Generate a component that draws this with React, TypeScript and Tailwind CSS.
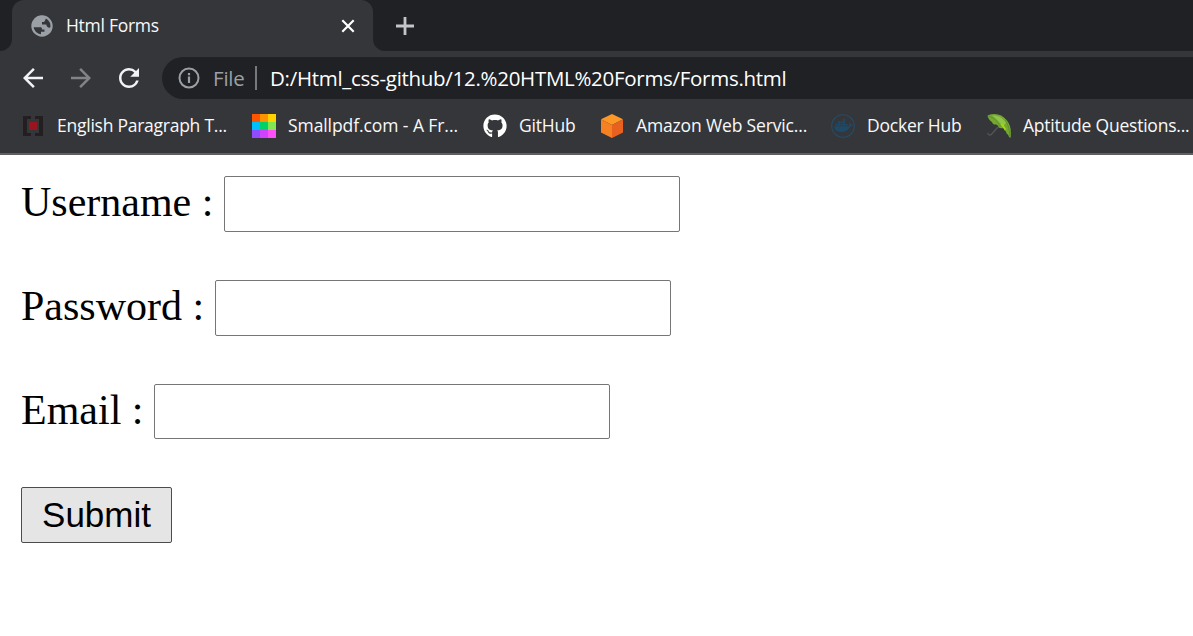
import type { ReactNode } from "react";
import { MdArrowBack, MdArrowForward, MdRefresh } from "react-icons/md";
import { FaGithub } from "react-icons/fa";

function Globe() {
  return (
    <svg viewBox="0 0 22 22" className="h-[22px] w-[22px]">
      <circle cx="11" cy="11" r="9.6" fill="none" stroke="#9aa0a6" strokeWidth="2.2" />
      <path d="M12 1C6 0 1 5 1 11v1c3 .3 6 .2 8 .2 1.600 0 2 .6 2 2.200h2.500v2.400h-3.500V20c6 1 11-3 11-8.500-1.500 1.600-3.500 1.600-4.700.3-.7-.8-1-1.600-1-2.400h-4.300V7h1.600c1.500 0 1.300-2.400 2.500-3.500z" fill="#9aa0a6" />
    </svg>
  );
}

function Info() {
  return (
    <svg viewBox="0 0 22 22" className="h-[22px] w-[22px]">
      <circle cx="11" cy="11" r="9.500" fill="none" stroke="#9aa0a6" strokeWidth="2" />
      <path d="M9.900 9.500h2.200v6.500H9.900zM9.900 6h2.200v2.200H9.900z" fill="#9aa0a6" />
    </svg>
  );
}

function Brackets() {
  return (
    <svg viewBox="0 0 20 20" className="h-5 w-5">
      <path d="M0 0h8v3H4v14h4v3H0zM12 0h8v20h-8v-3h4V3h-4z" fill="#231f20" />
      <path d="M6 6h8v8H6z" fill="#981520" />
    </svg>
  );
}

function ColorGrid() {
  return (
    <span className="grid h-6 w-6 grid-cols-3 grid-rows-3">
      <i className="bg-[#ff5400]" />
      <i className="bg-[#ff9200]" />
      <i className="bg-[#ffd200]" />
      <i className="bg-[#00bfff]" />
      <i className="bg-[#00d267]" />
      <i className="bg-[#81e650]" />
      <i className="bg-[#8f4cff]" />
      <i className="bg-[#cf42ff]" />
      <i className="bg-[#ff4ff8]" />
    </span>
  );
}

function Cube() {
  return (
    <svg viewBox="0 0 24 24" className="h-6 w-6">
      <path d="M12 0l11 5.200-11 5.800L1 5.200z" fill="#fd9827" />
      <path d="M1 5.200L12 11v13L1 18.500z" fill="#f58122" />
      <path d="M23 5.200L12 11v13l11-5.500z" fill="#e9611f" />
    </svg>
  );
}

function Docker() {
  return (
    <svg viewBox="0 0 24 24" className="h-6 w-6">
      <circle cx="12" cy="12" r="11.300" fill="none" stroke="#244c66" strokeWidth="1.100" />
      <path d="M3.300 12.300h13.400c.7 0 1.300-.2 1.700-.6-.6-1-.5-2.300.2-3.200.9.500 1.300 1.200 1.400 2 .8-.2 1.500 0 2 .4-.5 1.100-1.500 1.500-2.700 1.400-1.700 4-4.900 5.700-9.100 5.700-4.200 0-6.700-1.700-6.900-5.700z" fill="#1f4a67" />
      <path d="M4.500 9.700h2.100v2H4.500zM7 9.700h2.100v2H7zM9.500 9.700h2.100v2H9.500zM12 9.700h2.100v2H12zM14.500 9.700h2.100v2h-2.100zM7 7.300h2.100v2H7zM9.500 7.300h2.100v2H9.500zM12 7.300h2.100v2H12zM12 5h2.100v1.900H12z" fill="#1f4a67" />
    </svg>
  );
}

function Umbrella() {
  return (
    <svg viewBox="0 0 24 24" className="h-6 w-6">
      <path d="M11 13L4.700 20c-1.500 1.800-4 1.200-3.800-1.200" fill="none" stroke="#54565a" strokeWidth="1.200" />
      <path d="M.5 1.500C8-1.500 15 .3 20 6.500c3.500 4.500 4.500 10 3.500 17.500-1.200-.6-2-1.700-2.400-3.300-1.300-.7-2-1.700-2.100-3.200-1.700-.9-2.300-2-2.500-3.500-2 .5-3.800.2-5-.8-.2-1.500-.9-2.200-2.300-2.800-2.200.2-3.600-.5-4.200-2.500C3 7 1.200 4.500.5 1.500z" fill="#74a832" />
      <path d="M5 1.500c6-.4 10 1.800 14 7l-3 4.500C13 8.500 9.500 4.500 5 1.500z" fill="#91c448" />
      <path d="M1.500 2c5 1.500 9 5 12 11M18 6c3 4 4.500 9 4.800 16" fill="none" stroke="#5b8b28" strokeWidth=".8" />
      <path d="M14.500 10l4 5.500" stroke="#add80c" strokeWidth="1.800" />
    </svg>
  );
}

function Bookmark({ icon, label, className }: { icon: ReactNode; label: string; className: string }) {
  return (
    <div className="flex shrink-0 items-center">
      <span className="flex w-6 justify-center">{icon}</span>
      <span className={`mb-[2px] ml-3 whitespace-nowrap text-[17.5px] leading-6 text-[#f8f9fa] ${className}`}>{label}</span>
    </div>
  );
}

function Field({ label, type, className, inputClass }: { label: string; type: string; className: string; inputClass: string }) {
  return (
    <div className="flex h-[104px] items-start">
      <label className={`shrink-0 pt-[2px] text-[42px] leading-[48px] text-black ${className}`}>{label}</label>
      <input type={type} aria-label={label} className={`w-[456px] rounded-[2px] border border-[#767676] bg-white px-2 text-[35px] outline-none ${inputClass}`} />
    </div>
  );
}

export default function App() {
  return (
    <div className="flex h-[636px] w-[1193px] flex-col overflow-hidden bg-white">
      <header className="h-[155px] shrink-0 border-b-2 border-[#5f5f63] bg-[#35363a] font-['Open_Sans',sans-serif]">
        <div className="flex h-[51px] bg-[#35363a]">
          <div className="w-3 rounded-br-[12px] bg-[#202124]" />
          <div className="flex w-[361px] bg-[#202124]">
            <div className="flex w-full items-center rounded-t-[12px] bg-[#35363a] pl-[19px] pr-[18px]">
              <Globe />
              <span className="ml-[13px] text-[17.5px] tracking-[-0.28px] text-[#f8f9fa]">Html Forms</span>
              <svg viewBox="0 0 14 14" className="ml-auto h-[14px] w-[14px]">
                <path d="M1.300 1.300l11.400 11.400M12.700 1.300L1.300 12.700" stroke="#fff" strokeWidth="2.200" />
              </svg>
            </div>
          </div>
          <div className="flex flex-1 items-center rounded-bl-[12px] bg-[#202124] pl-[23px]">
            <svg viewBox="0 0 18 18" className="h-[18px] w-[18px]">
              <path d="M9 0v18M0 9h18" stroke="#c4c5c7" strokeWidth="2.800" />
            </svg>
          </div>
        </div>
        <div className="mt-[6px] flex h-[42px] items-center pl-[18px]">
          <MdArrowBack size={30} className="text-[#f1f3f4]" />
          <MdArrowForward size={30} className="ml-[18px] text-[#828386]" />
          <MdRefresh size={30} className="ml-[18px] text-[#f1f3f4]" />
          <div className="ml-[18px] flex h-[42px] flex-1 items-center rounded-l-full bg-[#202124] pl-[16px] text-[20.5px] leading-[30px]">
            <Info />
            <span className="ml-[13px] w-[42px] tracking-[-0.2px] text-[#9aa0a6]">File</span>
            <span className="h-6 w-[2px] bg-[#77787b]" />
            <span className="ml-[13px] tracking-[-0.29px] text-white">D:/Html_css-github/12.%20HTML%20Forms/Forms.html</span>
          </div>
        </div>
        <div className="flex h-[54px] items-center pl-[21px]">
          <Bookmark icon={<Brackets />} label="English Paragraph T..." className="w-[195px] tracking-[-0.25px]" />
          <Bookmark icon={<ColorGrid />} label="Smallpdf.com - A Fr..." className="w-[195px] tracking-[-0.08px]" />
          <Bookmark icon={<FaGithub size={24} className="text-white" />} label="GitHub" className="w-[81px] tracking-[-0.2px]" />
          <Bookmark icon={<Cube />} label="Amazon Web Servic..." className="w-[195px] tracking-[-0.15px]" />
          <Bookmark icon={<Docker />} label="Docker Hub" className="w-[120px] tracking-[-0.22px]" />
          <Bookmark icon={<Umbrella />} label="Aptitude Questions..." className="w-[171px] tracking-[-0.22px]" />
        </div>
      </header>
      <form className="flex flex-col items-start pl-[21px] pt-[21px] font-['Liberation_Serif',serif]" onSubmit={(e) => e.preventDefault()}>
        <Field label="Username :" type="text" className="w-[203px]" inputClass="h-14" />
        <Field label="Password :" type="password" className="w-[194px]" inputClass="h-14" />
        <Field label="Email :" type="email" className="w-[133px]" inputClass="h-[55px]" />
        <button className="-mt-px h-14 w-[151px] rounded-[2px] border border-[#4c4c4c] bg-[#e5e5e5] font-['Liberation_Sans',sans-serif] text-[35px] leading-[54px] text-black">Submit</button>
      </form>
    </div>
  );
}
